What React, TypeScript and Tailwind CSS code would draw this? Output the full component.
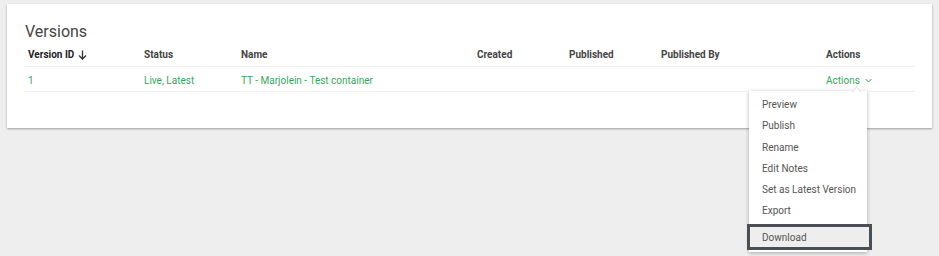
import React from "react";

const green = "text-[#35a85c]";

function ArrowDownIcon() {
  return (
    <svg width="9" height="10" viewBox="0 0 9 10" className="ml-[4px] inline-block">
      <path d="M4.5 0.5 V9 M1 5.5 L4.5 9 L8 5.5" fill="none" stroke="#333" strokeWidth="1.3" />
    </svg>
  );
}

function ChevronDown() {
  return (
    <svg width="7" height="5" viewBox="0 0 7 5" className="ml-[5px] inline-block">
      <path d="M0.5 1 L3.5 4 L6.5 1" fill="none" stroke="#35a85c" strokeWidth="1" />
    </svg>
  );
}

const cols = "grid grid-cols-[116px_97px_236px_92px_92px_165px_92px]";

export default function App() {
  const items = ["Preview", "Publish", "Rename", "Edit Notes", "Set as Latest Version", "Export"];
  return (
    <div
      className="relative w-[939px] h-[256px] bg-[#eeeeee] overflow-hidden pt-[4px] pl-[7px]"
      style={{ fontFamily: "Roboto, 'Liberation Sans', sans-serif" }}
    >
      <div className="w-[925px] h-[124px] bg-white shadow-[0_1px_2px_rgba(0,0,0,0.35)] pt-[18px] pl-[18px] pr-[17px]">
        <div className="text-[16px] leading-[20px] text-[#444]">Versions</div>
        <div className={`${cols} h-[24px] items-center text-[10px] font-bold text-[#444] border-b border-[#f0f0f0] mt-[1px]`}>
          <div className="pl-[3px] text-[#222] flex items-center">Version ID<ArrowDownIcon /></div>
          <div className="pl-[3px]">Status</div>
          <div className="pl-[3px]">Name</div>
          <div className="pl-[3px]">Created</div>
          <div className="pl-[3px]">Published</div>
          <div className="pl-[3px]">Published By</div>
          <div className="pl-[3px]">Actions</div>
        </div>
        <div className={`${cols} h-[25px] pt-[2px] items-center text-[10px] ${green} border-b border-[#f0f0f0]`}>
          <div className="pl-[3px]">1</div>
          <div className="pl-[3px]">Live, Latest</div>
          <div className="pl-[3px]">TT - Marjolein - Test container</div>
          <div></div>
          <div></div>
          <div></div>
          <div className="pl-[3px] flex items-center">Actions<ChevronDown /></div>
        </div>
      </div>

      <div className="absolute left-[749px] top-[91px] w-[118px] bg-white shadow-[0_1px_4px_rgba(0,0,0,0.3)] pt-[3px] pb-[2px] flex flex-col text-[10px] text-[#555]">
        <div className="absolute right-[7px] top-[-3px] w-[7px] h-[7px] bg-white rotate-45 border-l border-t border-[#e2e2e2]"></div>
        {items.map((t) => (
          <div key={t} className="h-[21.3px] leading-[21.3px] pl-[13px] relative">{t}</div>
        ))}
        <div className="mt-[2px] ml-[-2px] mr-[-5px] h-[26px] border-[3px] border-[#4a4f56] bg-[#eeeeee] leading-[21px] pl-[12px]">
          Download
        </div>
      </div>
    </div>
  );
}
